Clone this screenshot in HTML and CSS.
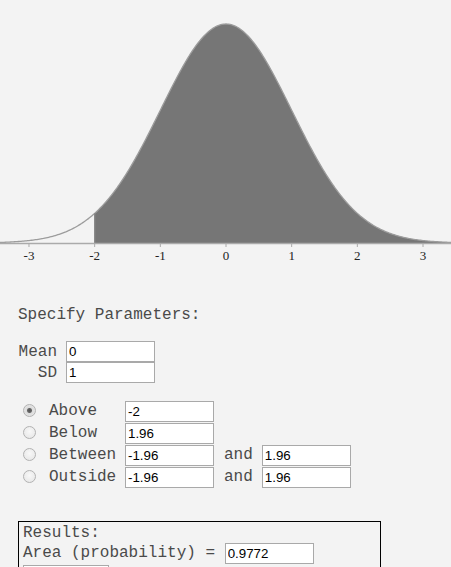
FILE: index.html
```html
<!DOCTYPE html>
<html lang="en">
<head>
    <meta charset="UTF-8">
    <meta name="viewport" content="width=device-width, initial-scale=1.0">
    <title>Normal Distribution Calculator</title>
    <link rel="stylesheet" href="styles.css">
</head>
<body>
    <svg id="plot" class="plot" width="451" height="265" viewBox="0 0 451 265">
        <path id="shade" class="shade" d=""></path>
        <path id="curve" class="curve" d=""></path>
        <line id="cut" class="cut" x1="0" y1="0" x2="0" y2="0"></line>
        <line class="axis" x1="0" y1="243.5" x2="451" y2="243.5"></line>
        <g id="ticks"></g>
    </svg>

    <div class="panel">
        <p class="title">Specify Parameters:</p>

        <div class="params">
            <div class="param-row">
                <label class="param-label" for="mean">Mean</label>
                <input id="mean" class="num" type="text" value="0">
            </div>
            <div class="param-row">
                <label class="param-label" for="sd">SD</label>
                <input id="sd" class="num" type="text" value="1">
            </div>
        </div>

        <div class="choices">
            <div class="choice">
                <input class="radio" type="radio" name="region" id="above" checked>
                <label class="choice-label" for="above">Above</label>
                <input class="num" type="text" value="-2">
            </div>
            <div class="choice">
                <input class="radio" type="radio" name="region" id="below">
                <label class="choice-label" for="below">Below</label>
                <input class="num" type="text" value="1.96">
            </div>
            <div class="choice">
                <input class="radio" type="radio" name="region" id="between">
                <label class="choice-label" for="between">Between</label>
                <input class="num" type="text" value="-1.96">
                <span class="and">and</span>
                <input class="num" type="text" value="1.96">
            </div>
            <div class="choice">
                <input class="radio" type="radio" name="region" id="outside">
                <label class="choice-label" for="outside">Outside</label>
                <input class="num" type="text" value="-1.96">
                <span class="and">and</span>
                <input class="num" type="text" value="1.96">
            </div>
        </div>

        <div class="results">
            <div class="res-line">Results:</div>
            <div class="res-row">
                <span class="res-label">Area (probability) = </span>
                <input class="num" type="text" value="0.9772">
            </div>
            <div class="res-row">
                <input class="num short" type="text" value="">
            </div>
        </div>
    </div>

    <script>
        // axis scale: z = 0 sits at x 226, one SD is ~65.7px
        const CX = 226, SX = 65.67, BASE = 243, AMP = 219;
        const CUT = -2;

        function px(z) { return CX + SX * z; }
        function py(z) { return BASE - AMP * Math.exp(-z * z / 2); }

        function pathFrom(z0, z1) {
            let d = '';
            for (let z = z0; z <= z1 + 1e-9; z += 0.02) {
                d += (d ? 'L' : 'M') + px(z).toFixed(2) + ',' + py(z).toFixed(2);
            }
            return d;
        }

        document.getElementById('curve').setAttribute('d', pathFrom(-3.6, 3.6));
        document.getElementById('shade').setAttribute('d',
            pathFrom(CUT, 3.6) + 'L' + px(3.6) + ',' + BASE + 'L' + px(CUT) + ',' + BASE + 'Z');

        const cut = document.getElementById('cut');
        cut.setAttribute('x1', px(CUT));
        cut.setAttribute('x2', px(CUT));
        cut.setAttribute('y1', BASE);
        cut.setAttribute('y2', py(CUT));

        // tick marks and labels for -3 .. 3
        const ns = 'http://www.w3.org/2000/svg';
        const ticks = document.getElementById('ticks');
        for (let z = -3; z <= 3; z++) {
            const t = document.createElementNS(ns, 'line');
            t.setAttribute('class', 'tick');
            t.setAttribute('x1', px(z));
            t.setAttribute('x2', px(z));
            t.setAttribute('y1', BASE);
            t.setAttribute('y2', BASE + 4);
            ticks.appendChild(t);

            const lbl = document.createElementNS(ns, 'text');
            lbl.setAttribute('class', 'tick-label');
            lbl.setAttribute('x', px(z));
            lbl.setAttribute('y', 260);
            lbl.textContent = z;
            ticks.appendChild(lbl);
        }
    </script>
</body>
</html>
```

FILE: styles.css
```css
body {
    margin: 0;
    background-color: #f3f3f3;
    font-family: "Liberation Mono", "Courier New", monospace;
    font-size: 16px;
    color: #4a4a4a;
}
.plot {
    display: block;
}
.shade {
    fill: #767676;
}
.curve {
    fill: none;
    stroke: #9c9c9c;
    stroke-width: 1.3;
}
.cut {
    stroke: #8a8a8a;
    stroke-width: 1.3;
}
.axis {
    stroke: #aaa;
    stroke-width: 1.6;
}
.tick {
    stroke: #aaa;
    stroke-width: 1;
}
.tick-label {
    font-family: "Liberation Serif", "Times New Roman", serif;
    font-size: 13px;
    fill: #222;
    text-anchor: middle;
}
.panel {
    padding: 0 18px;
}
.title {
    margin: 41px 0 0 0;
    line-height: 18px;
}
.num {
    box-sizing: border-box;
    width: 89px;
    height: 21px;
    margin: 0;
    padding: 1px 2px;
    border: 1px solid #a9a9a9;
    background: #fff;
    font-family: "Liberation Sans", Arial, sans-serif;
    font-size: 13.33px;
    color: #000;
}
.params {
    margin-top: 17px;
}
.param-row {
    display: flex;
    align-items: center;
    height: 21px;
}
.param-label {
    width: 39px;
    margin-right: 9px;
    text-align: right;
}
.choices {
    margin-top: 17px;
}
.choice {
    display: flex;
    align-items: center;
    height: 22px;
}
.radio {
    -webkit-appearance: none;
    appearance: none;
    box-sizing: border-box;
    width: 13px;
    height: 13px;
    margin: -2px 13px 0 5px;
    border: 1px solid #b2b2b2;
    border-radius: 50%;
    background: radial-gradient(circle at 50% 40%, #f8f8f8 0, #e4e4e4 100%);
}
.radio:checked {
    background: radial-gradient(circle, #555 0, #666 2px, #dcdcdc 3px, #ececec 100%);
}
.choice-label {
    width: 76px;
}
.and {
    margin: 0 9px 0 10px;
}
.results {
    margin-top: 33px;
    border: 1px solid #000;
    border-bottom: none;
    padding: 2px 4px 0 4px;
    width: 353px;
}
.res-line {
    line-height: 18px;
}
.res-row {
    display: flex;
    align-items: center;
    height: 22px;
}
.res-label {
    white-space: pre;
}
.short {
    width: 86px;
}
```
